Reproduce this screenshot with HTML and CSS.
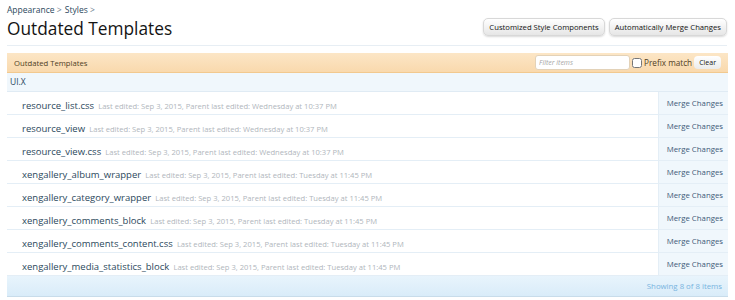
FILE: index.html
```html
<!DOCTYPE html>
<html lang="en">
<head>
    <meta charset="UTF-8">
    <title>Outdated Templates</title>
    <link rel="stylesheet" href="styles.css">
</head>
<body>
    <div class="page">
        <div class="breadcrumb">
            <a href="#">Appearance</a> <span class="sep">&gt;</span>
            <a href="#">Styles</a> <span class="sep">&gt;</span>
        </div>

        <div class="title-bar">
            <h1>Outdated Templates</h1>
            <div class="top-buttons">
                <button class="top-btn">Customized Style Components</button>
                <button class="top-btn">Automatically Merge Changes</button>
            </div>
        </div>

        <div class="list">
            <div class="list-head">
                <span class="list-title">Outdated Templates</span>
                <div class="filter">
                    <input type="text" class="filter-input" placeholder="Filter items">
                    <label class="prefix"><input type="checkbox"> Prefix match</label>
                    <button class="clear-btn">Clear</button>
                </div>
            </div>

            <div class="group">UI.X</div>

            <div class="row">
                <div class="row-main"><a class="name" href="#">resource_list.css</a> <span class="meta">Last edited: Sep 3, 2015, Parent last edited: Wednesday at 10:37 PM</span></div>
                <a class="merge" href="#">Merge Changes</a>
            </div>
            <div class="row">
                <div class="row-main"><a class="name" href="#">resource_view</a> <span class="meta">Last edited: Sep 3, 2015, Parent last edited: Wednesday at 10:37 PM</span></div>
                <a class="merge" href="#">Merge Changes</a>
            </div>
            <div class="row">
                <div class="row-main"><a class="name" href="#">resource_view.css</a> <span class="meta">Last edited: Sep 3, 2015, Parent last edited: Wednesday at 10:37 PM</span></div>
                <a class="merge" href="#">Merge Changes</a>
            </div>
            <div class="row">
                <div class="row-main"><a class="name" href="#">xengallery_album_wrapper</a> <span class="meta">Last edited: Sep 3, 2015, Parent last edited: Tuesday at 11:45 PM</span></div>
                <a class="merge" href="#">Merge Changes</a>
            </div>
            <div class="row">
                <div class="row-main"><a class="name" href="#">xengallery_category_wrapper</a> <span class="meta">Last edited: Sep 3, 2015, Parent last edited: Tuesday at 11:45 PM</span></div>
                <a class="merge" href="#">Merge Changes</a>
            </div>
            <div class="row">
                <div class="row-main"><a class="name" href="#">xengallery_comments_block</a> <span class="meta">Last edited: Sep 3, 2015, Parent last edited: Tuesday at 11:45 PM</span></div>
                <a class="merge" href="#">Merge Changes</a>
            </div>
            <div class="row">
                <div class="row-main"><a class="name" href="#">xengallery_comments_content.css</a> <span class="meta">Last edited: Sep 3, 2015, Parent last edited: Tuesday at 11:45 PM</span></div>
                <a class="merge" href="#">Merge Changes</a>
            </div>
            <div class="row">
                <div class="row-main"><a class="name" href="#">xengallery_media_statistics_block</a> <span class="meta">Last edited: Sep 3, 2015, Parent last edited: Tuesday at 11:45 PM</span></div>
                <a class="merge" href="#">Merge Changes</a>
            </div>

            <div class="list-foot">Showing 8 of 8 items</div>
        </div>
    </div>
</body>
</html>
```

FILE: styles.css
```css
body {
    margin: 0;
    background: #ffffff;
    font-family: 'Open Sans', sans-serif;
    color: #141414;
}

a {
    text-decoration: none;
}

.page {
    padding: 4px 7px 0 7px;
}

.breadcrumb {
    font-size: 8.5px;
    height: 12px;
    line-height: 12px;
}

.breadcrumb a {
    color: #2b485c;
}

.breadcrumb .sep {
    color: #6b7c8c;
    margin-right: 1px;
}

.title-bar {
    display: flex;
    justify-content: space-between;
    align-items: flex-start;
    border-bottom: 1px solid #e7eef4;
    height: 29px;
    margin-right: 1px;
}

h1 {
    margin: 0;
    font-weight: normal;
    font-size: 17.3px;
    line-height: 26px;
    color: #141414;
}

.top-buttons {
    display: flex;
    gap: 4px;
    margin-top: 2px;
}

.top-btn {
    font-family: 'Open Sans', sans-serif;
    font-size: 7.7px;
    color: #141414;
    background: linear-gradient(#ffffff, #e6e6e6);
    border: 1px solid #d8d8d8;
    border-radius: 5px;
    box-shadow: 0 1px 2px rgba(0,0,0,0.15);
    height: 18px;
    padding: 0 5px;
}

.list {
    margin-top: 7px;
    border-bottom: 1px solid #c8dcea;
}

.list-head {
    display: flex;
    justify-content: space-between;
    align-items: center;
    height: 19px;
    padding: 0 7px 0 7px;
    background: linear-gradient(#fce6c6, #f9d9ad);
    border-bottom: 1px solid #f2c98f;
}

.list-title {
    font-size: 7.7px;
    color: #503e25;
}

.filter {
    display: flex;
    align-items: center;
    font-size: 8.2px;
    color: #503e25;
}

.filter-input {
    width: 87px;
    height: 11px;
    padding: 1px 3px;
    font-family: 'Open Sans', sans-serif;
    font-size: 7px;
    font-style: italic;
    border: 1px solid #e3d2b8;
    border-radius: 3px;
}

.filter-input::placeholder {
    color: #a6a6a6;
}

.prefix {
    display: flex;
    align-items: center;
    margin-left: 2px;
}

.prefix input {
    width: 10px;
    height: 10px;
    margin: 0 2px 0 0;
}

.clear-btn {
    font-family: 'Open Sans', sans-serif;
    font-size: 7px;
    color: #141414;
    background: linear-gradient(#ffffff, #ececec);
    border: none;
    border-radius: 4px;
    height: 13px;
    padding: 0 5px;
    margin-left: 2px;
}

.group {
    background: #f0f7fc;
    height: 18px;
    line-height: 18px;
    padding-left: 3px;
    font-size: 8.5px;
    color: #2b485c;
    border-bottom: 1px solid #e0ebf4;
}

.row {
    display: flex;
    height: 22px;
    border-bottom: 1px solid #e4eef6;
}

.row-main {
    flex: 1;
    padding-left: 15px;
    line-height: 22px;
    white-space: nowrap;
    overflow: hidden;
}

.name {
    font-size: 9.5px;
    color: #2b485c;
}

.meta {
    font-size: 7.6px;
    color: #b0b6bc;
}

.merge {
    width: 64px;
    background: #f0f7fc;
    border-left: 1px solid #e4eef6;
    line-height: 22px;
    font-size: 7.8px;
    color: #3d5a78;
    text-align: right;
    padding-right: 5px;
}

.list-foot {
    height: 20px;
    line-height: 20px;
    background: linear-gradient(#e8f4fc, #d9ecf9);
    text-align: right;
    padding-right: 6px;
    font-size: 7.8px;
    color: #78b4e0;
}
```
